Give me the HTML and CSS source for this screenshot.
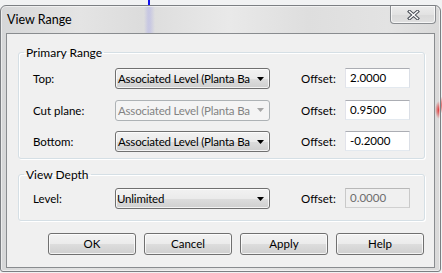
FILE: index.html
```html
<!DOCTYPE html>
<html>
<head>
<meta charset="utf-8">
<title>View Range</title>
<link rel="stylesheet" href="styles.css">
</head>
<body>
<div class="window">
  <div class="titlebar">
    <span class="title">View Range</span>
    <div class="close">
      <svg width="13" height="10" viewBox="0 0 13 10"><path d="M2.5 1.5L10.5 8.5M10.5 1.5L2.5 8.5" stroke="#4a4f57" stroke-width="3.4" stroke-linecap="square" fill="none"/><path d="M2.5 1.5L10.5 8.5M10.5 1.5L2.5 8.5" stroke="#ffffff" stroke-width="1.4" stroke-linecap="square" fill="none"/></svg>
    </div>
  </div>
  <div class="client">
    <fieldset class="group primary">
      <legend>Primary Range</legend>
      <div class="rows">
        <div class="row">
          <span class="label">Top:</span>
          <div class="combo"><span class="combo-text">Associated Level (Planta Ba</span><svg class="arrow" width="7" height="4" viewBox="0 0 7 4"><path d="M0 0H7L3.5 4Z"/></svg></div>
          <span class="offset-label">Offset:</span>
          <div class="field">2.0000</div>
        </div>
        <div class="row">
          <span class="label">Cut plane:</span>
          <div class="combo disabled"><span class="combo-text">Associated Level (Planta Ba</span><svg class="arrow" width="7" height="4" viewBox="0 0 7 4"><path d="M0 0H7L3.5 4Z"/></svg></div>
          <span class="offset-label">Offset:</span>
          <div class="field">0.9500</div>
        </div>
        <div class="row">
          <span class="label">Bottom:</span>
          <div class="combo"><span class="combo-text">Associated Level (Planta Ba</span><svg class="arrow" width="7" height="4" viewBox="0 0 7 4"><path d="M0 0H7L3.5 4Z"/></svg></div>
          <span class="offset-label">Offset:</span>
          <div class="field">-0.2000</div>
        </div>
      </div>
    </fieldset>
    <fieldset class="group depth">
      <legend>View Depth</legend>
      <div class="rows">
        <div class="row">
          <span class="label">Level:</span>
          <div class="combo level"><span class="combo-text">Unlimited</span><svg class="arrow" width="7" height="4" viewBox="0 0 7 4"><path d="M0 0H7L3.5 4Z"/></svg></div>
          <span class="offset-label">Offset:</span>
          <div class="field disabled">0.0000</div>
        </div>
      </div>
    </fieldset>
    <div class="buttons">
      <div class="btn">OK</div>
      <div class="btn">Cancel</div>
      <div class="btn">Apply</div>
      <div class="btn">Help</div>
    </div>
  </div>
</div>
</body>
</html>
```

FILE: styles.css
```css
html, body {
  margin: 0;
  padding: 0;
}

body {
  width: 442px;
  height: 273px;
  overflow: hidden;
  font-family: "Segoe UI", Lato, "Open Sans", sans-serif;
  font-size: 11.5px;
  color: #000;
  background:
    radial-gradient(4px 9px at 440px 105px, rgba(222, 40, 40, 0.95), rgba(222, 40, 40, 0) 100%),
    linear-gradient(to right, transparent 148px, #1010f0 148px, #1010f0 150px, transparent 150px) 0 0 / 100% 5px no-repeat,
    #f1f2f3;
}

.window {
  margin-top: 5px;
  width: 441px;
  height: 267px;
  box-sizing: border-box;
  border: 1px solid #7c7f83;
  border-radius: 6px 6px 3px 3px;
  background:
    radial-gradient(4px 9px at 438px 104px, rgba(222, 40, 40, 0.95), rgba(222, 40, 40, 0) 100%),
    linear-gradient(to right, transparent 143px, rgba(160, 160, 235, 0.35) 147px, rgba(160, 160, 235, 0.35) 149px, transparent 154px) 0 0 / 100% 27px no-repeat,
    linear-gradient(to right, #d6d7d8 0%, #e4e4e4 18%, #dcdcdc 32%, #e9e9e9 52%, #dedede 70%, #e3e3e3 88%, #d9d9d9 100%);
  box-shadow: inset 0 0 0 1px rgba(255, 255, 255, 0.55);
  display: flex;
  flex-direction: column;
}

.titlebar {
  height: 27px;
  flex: none;
  display: flex;
  justify-content: space-between;
  align-items: flex-start;
  padding-left: 6px;
}

.title {
  margin-top: 6px;
  font-size: 12.5px;
  line-height: 15px;
  color: #000;
}

.close {
  width: 46px;
  height: 18px;
  box-sizing: border-box;
  margin-right: 4px;
  border: 1px solid #8a8d91;
  border-top: none;
  border-radius: 0 0 4px 4px;
  background: linear-gradient(#ececec, #e2e2e2 50%, #d9d9d9 51%, #e0e0e0);
  box-shadow: inset 0 0 0 1px rgba(255, 255, 255, 0.7);
  display: flex;
  justify-content: center;
  align-items: center;
  padding-top: 1px;
}

.client {
  margin: 0 5px;
  height: 235px;
  flex: none;
  box-sizing: border-box;
  border: 1px solid #898c8f;
  background: #f0f0f0;
  display: flex;
  flex-direction: column;
  padding: 0 9px 0 11px;
}

.group {
  margin: 0;
  padding: 0;
  min-width: 0;
  border: 1px solid #d5dfe5;
  border-radius: 3px;
  box-shadow: inset 1px 1px 0 #fff, 1px 1px 0 #fff;
}

.group legend {
  margin-left: 5px;
  padding: 0 2px;
  line-height: 15px;
  font-size: 12px;
}

.primary {
  margin-top: 11px;
}

.primary .rows {
  padding: 8px 0 6px 14px;
  display: flex;
  flex-direction: column;
  gap: 10.5px;
}

.depth {
  margin-top: 8px;
}

.depth .rows {
  padding: 6px 0 11px 14px;
}

.row {
  display: flex;
  align-items: flex-start;
  height: 21px;
}

.label {
  width: 82px;
  line-height: 21px;
}

.combo {
  width: 155px;
  height: 21px;
  box-sizing: border-box;
  border: 1px solid #707070;
  border-radius: 3px;
  background: linear-gradient(#f2f2f2 0%, #ebebeb 50%, #dddddd 51%, #cfcfcf 100%);
  box-shadow: inset 0 0 0 1px rgba(255, 255, 255, 0.75);
  display: flex;
  align-items: center;
  padding: 0 5px 0 2px;
}

.combo.level {
  padding-left: 1px;
}

.combo-text {
  flex: 1;
  min-width: 0;
  white-space: nowrap;
  line-height: 19px;
  letter-spacing: -0.2px;
}

.arrow {
  flex: none;
  margin-left: 2px;
  fill: #000;
}

.combo.disabled {
  border-color: #adb2b5;
  background: #f4f4f4;
  box-shadow: none;
  color: #838383;
}

.combo.disabled .arrow {
  fill: #a6a6a6;
}

.offset-label {
  margin-left: 31px;
  width: 44px;
  line-height: 21px;
}

.field {
  width: 65px;
  height: 20px;
  box-sizing: border-box;
  border: 1px solid;
  border-color: #abadb3 #dbdfe6 #e3e9ef #e2e3ea;
  background: #fff;
  padding-left: 4px;
  line-height: 18px;
}

.field.disabled {
  background: #f0f0f0;
  border-color: #b8b8b8 #c9c9c9 #d0d0d0 #c9c9c9;
  color: #6d6d6d;
}

.buttons {
  margin-top: 12px;
  display: flex;
  justify-content: flex-end;
  gap: 8px;
  padding-right: 1px;
}

.btn {
  width: 88px;
  height: 22px;
  box-sizing: border-box;
  border: 1px solid #707070;
  border-radius: 3px;
  background: linear-gradient(#f2f2f2 0%, #ebebeb 50%, #dddddd 51%, #cfcfcf 100%);
  box-shadow: inset 0 0 0 1px rgba(255, 255, 255, 0.75);
  text-align: center;
  line-height: 20px;
}
```
